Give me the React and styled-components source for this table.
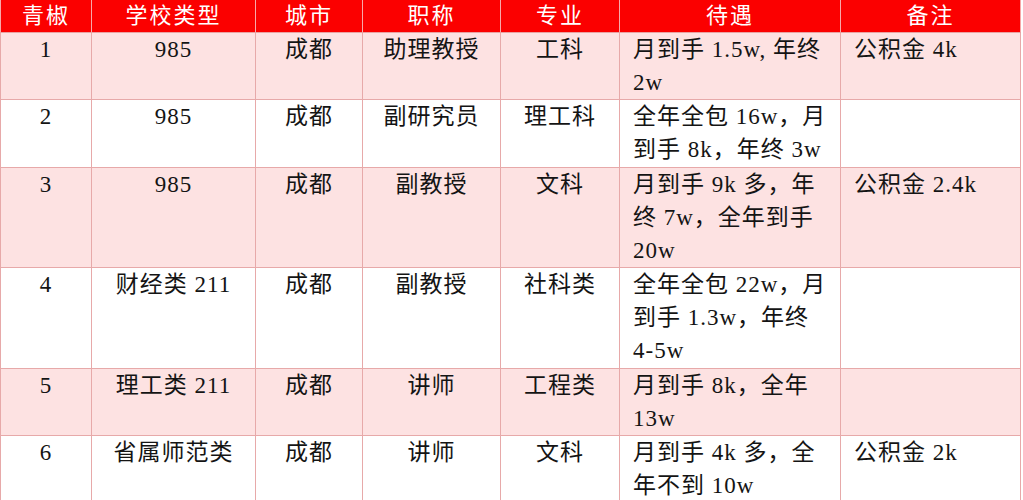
import React from "react";
import styled, { createGlobalStyle } from "styled-components";

const GlobalStyle = createGlobalStyle`
  html, body {
    margin: 0;
    padding: 0;
    background: #ffffff;
  }
  body {
    font-family: "Liberation Serif", "Noto Sans CJK SC", serif;
  }
`;

// column widths taken from the screenshot
const columns = [
  { title: "青椒", width: 91, align: "center" },
  { title: "学校类型", width: 164, align: "center" },
  { title: "城市", width: 107, align: "center" },
  { title: "职称", width: 138, align: "center" },
  { title: "专业", width: 119, align: "center" },
  { title: "待遇", width: 221, align: "left" },
  { title: "备注", width: 180, align: "left" },
];

const rows = [
  {
    height: 67,
    cells: [["1"], ["985"], ["成都"], ["助理教授"], ["工科"], ["月到手 1.5w, 年终", "2w"], ["公积金 4k"]],
  },
  {
    height: 68,
    cells: [["2"], ["985"], ["成都"], ["副研究员"], ["理工科"], ["全年全包 16w，月", "到手 8k，年终 3w"], []],
  },
  {
    height: 100,
    cells: [["3"], ["985"], ["成都"], ["副教授"], ["文科"], ["月到手 9k 多，年", "终 7w，全年到手", "20w"], ["公积金 2.4k"]],
  },
  {
    height: 101,
    cells: [["4"], ["财经类 211"], ["成都"], ["副教授"], ["社科类"], ["全年全包 22w，月", "到手 1.3w，年终", "4-5w"], []],
  },
  {
    height: 66,
    cells: [["5"], ["理工类 211"], ["成都"], ["讲师"], ["工程类"], ["月到手 8k，全年", "13w"], []],
  },
  {
    height: 66,
    cells: [["6"], ["省属师范类"], ["成都"], ["讲师"], ["文科"], ["月到手 4k 多，全", "年不到 10w"], ["公积金 2k"]],
  },
];

const Table = styled.table`
  border-collapse: collapse;
  table-layout: fixed;
  width: 1020px;
  color: #141414;
  font-size: 23px;
  letter-spacing: 1px;
`;

const HeadCell = styled.th`
  height: 32px;
  padding: 0;
  background: #fb0000;
  color: #ffffff;
  font-weight: normal;
  font-size: 22px;
  letter-spacing: 2px;
  text-align: center;
  line-height: 30px;
  border-left: 1px solid #f7a8a8;
  border-right: 1px solid #f7a8a8;
  border-bottom: 1px solid #e9a2a2;
`;

const Row = styled.tr`
  background: ${(p) => (p.$shaded ? "#fde2e2" : "#ffffff")};
`;

const Cell = styled.td`
  padding: ${(p) => (p.$align === "left" ? "0 6px 0 13px" : "0 4px")};
  vertical-align: top;
  text-align: ${(p) => p.$align};
  line-height: 33px;
  border: 1px solid #e7a9a9;
`;

const Line = styled.div`
  white-space: nowrap;
`;

export default function App() {
  return (
    <>
      <GlobalStyle />
      <Table>
        <colgroup>
          {columns.map((c) => (
            <col key={c.title} style={{ width: c.width }} />
          ))}
        </colgroup>
        <thead>
          <tr>
            {columns.map((c) => (
              <HeadCell key={c.title}>{c.title}</HeadCell>
            ))}
          </tr>
        </thead>
        <tbody>
          {rows.map((row, i) => (
            <Row key={i} $shaded={i % 2 === 0} style={{ height: row.height }}>
              {row.cells.map((lines, j) => (
                <Cell key={j} $align={columns[j].align}>
                  {lines.map((text, k) => (
                    <Line key={k}>{text}</Line>
                  ))}
                </Cell>
              ))}
            </Row>
          ))}
        </tbody>
      </Table>
    </>
  );
}
